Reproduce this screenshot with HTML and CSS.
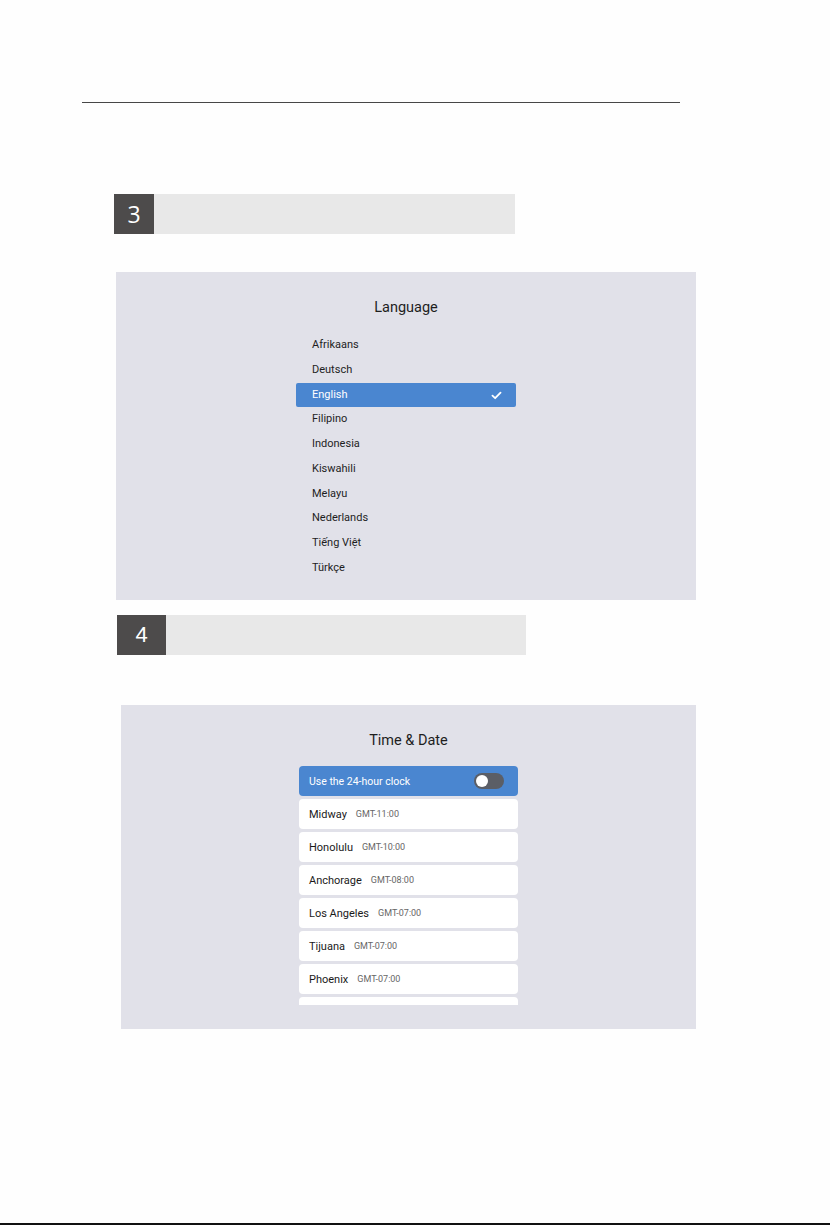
FILE: index.html
```html
<!DOCTYPE html>
<html lang="en">
<head>
<meta charset="utf-8">
<title>Setup guide</title>
<link rel="stylesheet" href="styles.css">
</head>
<body>
<div class="page">
  <div class="rule-top"></div>

  <div class="step step-3">
    <div class="step-num num-3">3</div>
    <div class="step-bar"></div>
  </div>

  <section class="panel panel-lang">
    <h2 class="panel-title">Language</h2>
    <ul class="lang-list">
      <li class="lang-item">Afrikaans</li>
      <li class="lang-item">Deutsch</li>
      <li class="lang-item is-selected">English
        <svg class="check" viewBox="0 0 12 10" width="11" height="9"><path d="M1.5 5.2 L4.5 8 L10.5 1.8" fill="none" stroke="#fff" stroke-width="2" stroke-linecap="round" stroke-linejoin="round"/></svg>
      </li>
      <li class="lang-item">Filipino</li>
      <li class="lang-item">Indonesia</li>
      <li class="lang-item">Kiswahili</li>
      <li class="lang-item">Melayu</li>
      <li class="lang-item">Nederlands</li>
      <li class="lang-item">Tiếng Việt</li>
      <li class="lang-item">Türkçe</li>
    </ul>
  </section>

  <div class="step step-4">
    <div class="step-num num-4">4</div>
    <div class="step-bar"></div>
  </div>

  <section class="panel panel-time">
    <h2 class="panel-title">Time &amp; Date</h2>
    <div class="tz-list">
      <div class="tz-row tz-clock">
        <span class="clock-label">Use the 24-hour clock</span>
        <span class="toggle"><span class="knob"></span></span>
      </div>
      <div class="tz-row"><span class="city">Midway</span><span class="offset">GMT-11:00</span></div>
      <div class="tz-row"><span class="city">Honolulu</span><span class="offset">GMT-10:00</span></div>
      <div class="tz-row"><span class="city">Anchorage</span><span class="offset">GMT-08:00</span></div>
      <div class="tz-row"><span class="city">Los Angeles</span><span class="offset">GMT-07:00</span></div>
      <div class="tz-row"><span class="city">Tijuana</span><span class="offset">GMT-07:00</span></div>
      <div class="tz-row"><span class="city">Phoenix</span><span class="offset">GMT-07:00</span></div>
      <!-- next row peeks in under the scroll edge -->
      <div class="tz-row tz-peek"></div>
    </div>
  </section>

  <div class="rule-bottom"></div>
</div>
</body>
</html>
```

FILE: styles.css
```css
* { box-sizing: border-box; }

html, body {
  margin: 0;
  padding: 0;
  background: #fefefe;
}

.page {
  width: 830px;
  height: 1225px;
  display: flex;
  flex-direction: column;
  font-family: Roboto, "Liberation Sans", sans-serif;
  color: #222;
}

.rule-top {
  margin: 102px 0 0 82px;
  width: 598px;
  height: 1px;
  background: #474747;
}

/* step headers */
.step {
  display: flex;
  height: 40px;
}
.step-3 { margin: 91px 0 0 114px; }
.step-4 { margin: 15px 0 0 117px; }

.step-num {
  background: #4d4b4b;
  color: #fff;
  display: flex;
  align-items: center;
  justify-content: center;
}
.num-3 {
  width: 40px;
  font-family: "Open Sans", sans-serif;
  font-size: 23px;
}
.num-4 {
  width: 49px;
  font-family: "Liberation Sans", sans-serif;
  font-size: 22px;
}
.step-bar { background: #e8e8e8; }
.step-3 .step-bar { width: 361px; }
.step-4 .step-bar { width: 360px; }

/* screen panels */
.panel {
  background: #e1e1e9;
  display: flex;
  flex-direction: column;
  align-items: center;
}
.panel-lang {
  margin: 38px 0 0 116px;
  width: 580px;
  height: 328px;
  padding-top: 26px;
}
.panel-time {
  margin: 50px 0 0 121px;
  width: 575px;
  height: 324px;
  padding-top: 26px;
}

.panel-title {
  margin: 0;
  font-size: 14.5px;
  font-weight: 400;
  line-height: 20px;
  color: #1e1e1e;
}

/* language list */
.lang-list {
  list-style: none;
  margin: 15.4px 0 0;
  padding: 0;
  width: 220px;
}
.lang-item {
  height: 24.7px;
  line-height: 24.7px;
  padding: 0 14px 0 16px;
  font-size: 11px;
  color: #1e1e1e;
  display: flex;
  align-items: center;
  justify-content: space-between;
}
.lang-item.is-selected {
  background: #4a86d0;
  color: #fff;
  border-radius: 2px;
}
.check { display: block; }

/* time zone list */
.tz-list {
  margin-top: 15px;
  width: 219px;
  height: 239px;
  overflow: hidden;
  display: flex;
  flex-direction: column;
  gap: 3px;
}
.tz-row {
  flex: 0 0 30px;
  background: #fff;
  border-radius: 4px;
  display: flex;
  align-items: center;
  padding: 0 10px;
  gap: 9px;
}
.tz-clock {
  background: #4a86d0;
  justify-content: space-between;
  padding-right: 14px;
}
.clock-label {
  color: #fff;
  font-size: 10.5px;
}
.toggle {
  width: 30px;
  height: 16px;
  border-radius: 8px;
  background: #5b5e66;
  display: flex;
  align-items: center;
  padding-left: 2px;
}
.knob {
  width: 12px;
  height: 12px;
  border-radius: 50%;
  background: #fff;
}
.city {
  font-size: 11px;
  font-weight: 400;
  color: #1a1a1a;
}
.offset {
  font-size: 9px;
  color: #666;
}

.rule-bottom {
  margin-top: auto;
  height: 2px;
  background: #111;
}
```
